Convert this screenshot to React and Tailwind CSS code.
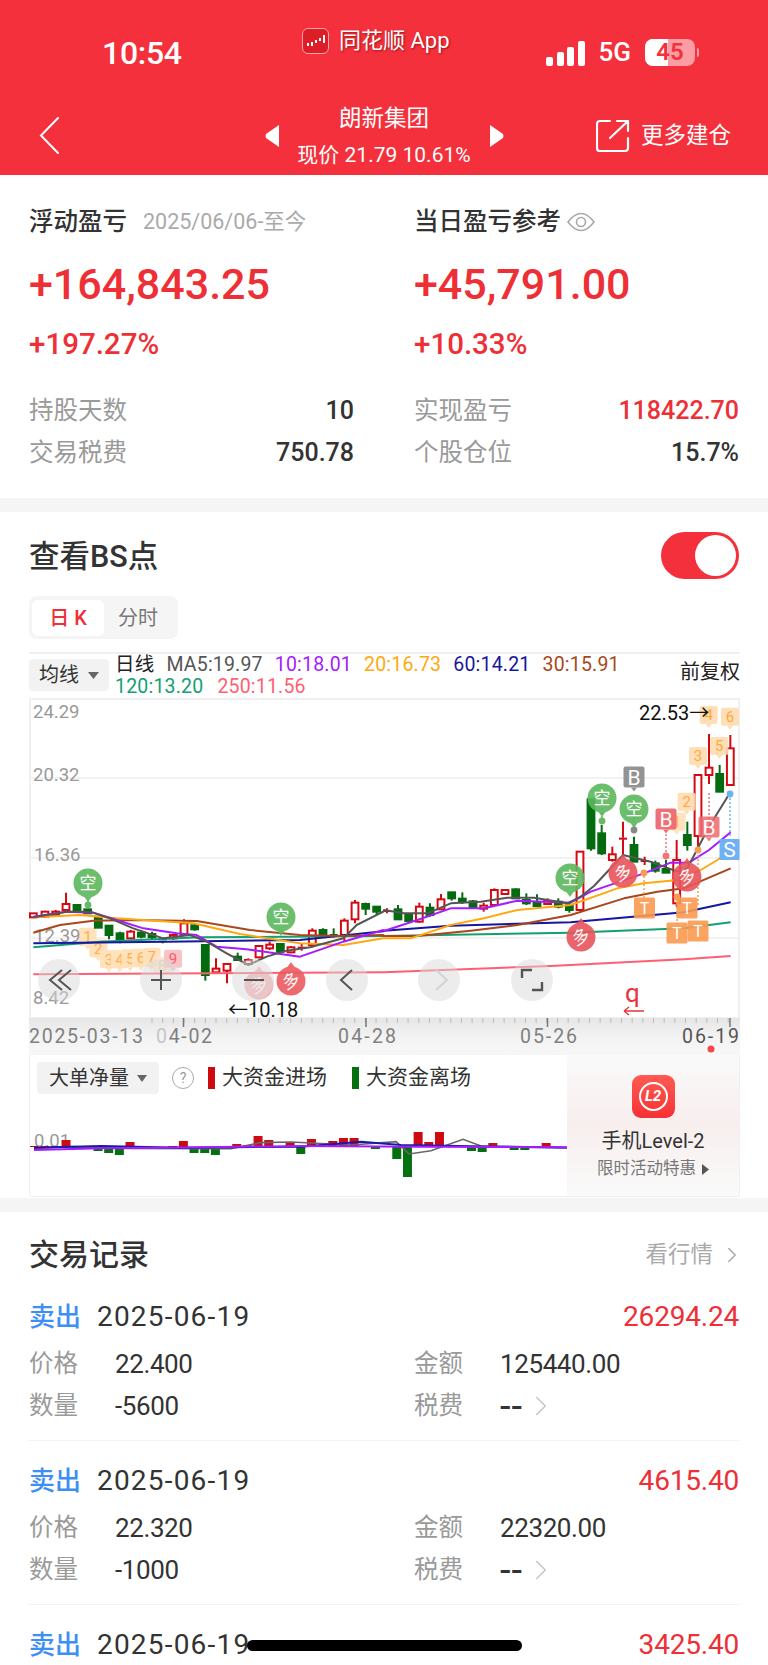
import { ChevronRight } from 'lucide-react';

const FONT = { fontFamily: 'Roboto, "Noto Sans CJK SC", sans-serif' };

// chart traces are noted in three local grids, these put them in page pixels
const a = (x, y) => [x / 3, 860 + y / 3];
const b = (x, y) => [384 + x / 3, 860 + y / 3];
const c = (x, y) => [384 + x / 3, 640 + y / 3];

// x, body top, body bottom, wick top, wick bottom, up
const candles = [
  [a, 100, 160, 172, 160, 172, 1], [a, 135, 155, 170, 152, 172, 1], [a, 167, 155, 165, 150, 170, 1],
  [a, 198, 132, 150, 98, 150, 1], [a, 231, 135, 150, 135, 150, 0], [a, 263, 148, 160, 148, 160, 0],
  [a, 295, 170, 203, 170, 203, 0], [a, 327, 197, 225, 197, 238, 0], [a, 360, 220, 238, 215, 250, 0],
  [a, 392, 215, 235, 210, 238, 1], [a, 424, 218, 230, 210, 235, 0], [a, 456, 222, 232, 215, 240, 0],
  [a, 488, 235, 243, 232, 250, 0], [a, 520, 225, 235, 222, 240, 1], [a, 552, 190, 225, 178, 228, 1],
  [a, 584, 196, 208, 190, 212, 0], [a, 616, 255, 345, 255, 362, 0], [a, 648, 326, 337, 295, 340, 1],
  [a, 681, 312, 332, 312, 370, 1], [a, 713, 290, 300, 278, 300, 0], [a, 745, 300, 312, 295, 314, 1],
  [a, 777, 258, 292, 255, 295, 1], [a, 809, 254, 265, 245, 270, 1], [a, 841, 252, 275, 252, 282, 0],
  [a, 873, 262, 277, 258, 280, 1], [a, 905, 260, 264, 250, 272, 1], [a, 937, 212, 255, 205, 262, 1],
  [a, 969, 210, 228, 205, 232, 0], [a, 1001, 222, 230, 205, 232, 0], [a, 1033, 182, 225, 175, 245, 1],
  [a, 1065, 128, 178, 120, 190, 1], [a, 1097, 132, 146, 128, 165, 0], [a, 1130, 140, 155, 140, 165, 0],
  [b, 9, 150, 155, 145, 160, 1], [b, 42, 148, 178, 135, 178, 0], [b, 74, 163, 183, 163, 185, 0],
  [b, 106, 140, 185, 128, 188, 1], [b, 138, 143, 165, 130, 170, 0], [b, 171, 118, 148, 102, 150, 1],
  [b, 203, 97, 115, 97, 122, 0], [b, 235, 116, 125, 97, 132, 0], [b, 267, 124, 142, 120, 145, 0],
  [b, 299, 137, 146, 128, 155, 1], [b, 331, 90, 135, 85, 137, 1], [b, 363, 90, 102, 88, 104, 1],
  [b, 395, 88, 115, 85, 115, 0], [b, 427, 120, 130, 100, 135, 0], [b, 459, 127, 138, 103, 140, 0],
  [b, 491, 123, 132, 115, 135, 1], [b, 523, 125, 140, 115, 145, 0], [b, 556, 136, 150, 125, 158, 0],
  [c, 588, 635, 810, 635, 810, 1], [c, 621, 478, 625, 478, 632, 0], [c, 653, 580, 640, 555, 645, 0],
  [c, 685, 643, 660, 620, 665, 1], [c, 717, 593, 598, 545, 650, 1], [c, 750, 615, 665, 590, 665, 0],
  [c, 782, 660, 665, 650, 675, 1], [c, 814, 670, 692, 662, 698, 0], [c, 846, 687, 698, 660, 698, 0],
  [c, 878, 660, 790, 600, 800, 1], [c, 910, 585, 615, 545, 632, 0], [c, 942, 405, 588, 405, 620, 1],
  [c, 975, 383, 405, 282, 432, 1], [c, 1007, 402, 455, 375, 455, 0], [c, 1039, 325, 435, 285, 435, 1],
];

function a2(pts) { return pts.map(([x, y]) => a(x, y)); }
function b2(pts) { return pts.map(([x, y]) => b(x, y)); }

const maLines = [
  ['#ff5f73', [...a2([[100, 343], [1150, 337]]), ...b2([[0, 337], [500, 318], [900, 298], [1040, 288]])]],
  ['#12a071', [...a2([[100, 262], [300, 245], [600, 232], [1150, 228]]), ...b2([[0, 228], [560, 218], [900, 205], [1040, 187]])]],
  ['#1616a0', [...a2([[100, 250], [500, 245], [900, 240], [1150, 214]]), ...b2([[0, 212], [200, 197], [560, 187], [900, 157], [1040, 127]])]],
  ['#a8481a', [...a2([[100, 218], [180, 195], [280, 182], [400, 180], [590, 183], [750, 210], [900, 225], [1020, 228], [1150, 225]]), ...b2([[0, 228], [100, 228], [260, 212], [400, 195], [560, 165], [720, 115], [820, 95], [900, 85], [1040, 25]])]],
  ['#ffa811', [...a2([[100, 172], [240, 165], [350, 175], [580, 190], [720, 222], [900, 250], [1030, 255], [1150, 235]]), ...b2([[0, 235], [80, 235], [200, 195], [300, 175], [400, 150], [560, 135], [700, 85], [780, 70], [880, 60], [950, 30], [1000, 0], [1040, -28]])]],
  ['#a61bff', [...a2([[100, 170], [200, 155], [280, 158], [350, 180], [430, 205], [530, 220], [590, 225], [650, 260], [740, 268], [900, 290], [1030, 245], [1150, 210]]), ...b2([[0, 213], [100, 180], [200, 145], [300, 145], [400, 122], [560, 128], [620, 95], [780, 40], [860, 8], [915, 8], [975, -30], [1040, -83]])]],
  ['#555555', [...a2([[100, 172], [200, 155], [270, 155], [330, 175], [400, 205], [490, 235], [570, 225], [620, 245], [680, 280], [745, 315], [800, 290], [860, 272], [930, 262], [1030, 235], [1070, 195], [1150, 155]]), ...b2([[0, 150], [60, 160], [130, 160], [200, 130], [290, 125], [370, 113], [450, 113], [550, 130], [590, 110], [630, 78], [717, -15], [800, 5], [880, 35], [910, 25], [975, -100], [1040, -205]])]],
];

const Pin = ({ x, y, label, fill, up = false, opacity = 0.9 }) => (
  <g opacity={opacity}>
    <path d={up ? `M${x - 5} ${y - 12}L${x} ${y - 19}L${x + 5} ${y - 12}Z` : `M${x - 5} ${y + 12}L${x} ${y + 19}L${x + 5} ${y + 12}Z`} fill={fill} />
    <circle cx={x} cy={y} r="14.5" fill={fill} />
    <text x={x} y={y + 6} textAnchor="middle" fontSize="17" fill="#fff" transform={label === '多' ? `rotate(-25 ${x} ${y})` : undefined}>{label}</text>
  </g>
);

const Tag = ({ x, y, label, fill, color, size = 18, fontSize = 15, opacity = 1 }) => (
  <g opacity={opacity}>
    <rect x={x - size / 2} y={y - size / 2} width={size} height={size} rx="2" fill={fill} />
    <path d={`M${x - 3} ${y + size / 2}L${x} ${y + size / 2 + 4}L${x + 3} ${y + size / 2}Z`} fill={fill} />
    <text x={x} y={y + fontSize * 0.36} textAnchor="middle" fontSize={fontSize} fill={color}>{label}</text>
  </g>
);

const Stem = ({ x, y1, y2, color }) => (
  <g>
    <line x1={x} y1={y1} x2={x} y2={y2} stroke={color} strokeWidth="1.5" strokeDasharray="2 2" />
    <circle cx={x} cy={y2} r="3.4" fill={color} />
  </g>
);

const RoundBtn = ({ x, children, fade }) => (
  <g>
    <circle cx={x} cy="980" r="21" fill="#d9d9d9" opacity="0.5" />
    <g stroke={fade ? '#d3d3d3' : '#555'} strokeWidth="2" fill="none">{children}</g>
  </g>
);

const tickXs = Array.from({ length: 55 }, (_, i) => 152 + i * 10.67);

function KChart() {
  return (
    <svg width="711" height="357" viewBox="29 698 711 357" className="ml-[29px] block" style={FONT}>
      <defs>
        <linearGradient id="dateStrip" x1="0" y1="0" x2="0" y2="1">
          <stop offset="0" stopColor="#e6e6e6" />
          <stop offset="0.5" stopColor="#f3f3f3" />
          <stop offset="1" stopColor="#f7f7f7" />
        </linearGradient>
      </defs>
      <rect x="29" y="698" width="711" height="320" fill="#fff" />
      {[778, 858, 938].map((y) => <line key={y} x1="29" x2="740" y1={y} y2={y} stroke="#eeeeee" strokeWidth="1.5" />)}
      <rect x="30" y="699" width="709" height="319" fill="none" stroke="#f0f0f0" strokeWidth="2" />

      <rect x="29" y="1018" width="711" height="37" fill="url(#dateStrip)" />
      {tickXs.map((x) => <line key={x} x1={x} x2={x} y1="1018" y2="1023" stroke="#bbbbbb" />)}
      {[183.5, 366, 547.5, 730].map((x) => <line key={x} x1={x} x2={x} y1="1018" y2="1027" stroke="#777" strokeWidth="1.5" />)}
      <g fontSize="19.5" fill="#808080">
        <text x="29" y="1043" textLength="114">2025-03-13</text>
        <text x="156" y="1043" textLength="56"><tspan fill="#c6c6c6">0</tspan>4-02</text>
        <text x="338" y="1043" textLength="58">04-28</text>
        <text x="520" y="1043" textLength="57">05-26</text>
        <text x="682" y="1043" textLength="57" fill="#555">06-19</text>
      </g>
      <circle cx="711" cy="1049" r="3.5" fill="#f4484f" />

      {/* numbered signal tags sit under the candles */}
      <g opacity="0.85">
        {[[263, 230, '1'], [295, 265, '2'], [327, 298, '3'], [359, 298, '4'], [391, 295, '5'], [423, 293, '6'], [455, 291, '7']].map(([x, y, t]) => {
          const [px, py] = a(x, y);
          return <Tag key={t} x={px} y={py} label={t} fill="#ffdcb0" color="#ffa029" />;
        })}
        <Tag x={a(487, 0)[0]} y={a(0, 317)[1]} label="8" fill="#ffe3c2" color="#f0c080" opacity="0.8" />
        <Tag x={a(519, 0)[0]} y={a(0, 296)[1]} label="9" fill="#f8b9bc" color="#f0444c" />
      </g>

      <g fontSize="18.5" fill="#999">
        <text x="33" y="718">24.29</text>
        <text x="33" y="781">20.32</text>
        <text x="34" y="861">16.36</text>
        <text x="34" y="942">12.39</text>
        <text x="33" y="1004">8.42</text>
      </g>

      {candles.map(([fn, x, top, bottom, wickTop, wickBottom, up], i) => {
        const [px, y1] = fn(x, top);
        const y2 = fn(x, bottom)[1];
        const w1 = fn(x, wickTop)[1];
        const w2 = fn(x, wickBottom)[1];
        const color = up ? '#d40a12' : '#046b10';
        const thin = y2 - y1 < 3;
        return (
          <g key={i}>
            <line x1={px} x2={px} y1={w1} y2={y1} stroke={color} strokeWidth="2" />
            <line x1={px} x2={px} y1={y2} y2={w2} stroke={color} strokeWidth="2" />
            {thin
              ? <rect x={px - 4} y={y1} width="8" height="2" fill={color} />
              : <rect x={px - 3.4} y={y1} width="6.8" height={y2 - y1} fill={up ? '#fff' : color} stroke={color} strokeWidth="2" />}
          </g>
        );
      })}

      {maLines.map(([color, pts]) => (
        <polyline key={color} points={pts.map((p) => p.join(',')).join(' ')} fill="none" stroke={color} strokeWidth="2" strokeLinejoin="round" />
      ))}

      {/* orange tags on the right run */}
      <Tag x={c(878, 0)[0]} y={c(0, 545)[1]} label="1" fill="#ffdcb0" color="#ffa029" opacity="0.8" />
      <Tag x={c(908, 0)[0]} y={c(0, 485)[1]} label="2" fill="#ffdcb0" color="#ffa029" opacity="0.9" />
      <Tag x={c(942, 0)[0]} y={c(0, 348)[1]} label="3" fill="#ffdcb0" color="#ffa029" opacity="0.9" />
      <Tag x={c(974, 0)[0]} y={c(0, 225)[1]} label="4" fill="#ffdcb0" color="#ffa029" opacity="0.9" />
      <Tag x={c(1006, 0)[0]} y={c(0, 318)[1]} label="5" fill="#ffdcb0" color="#ffa029" opacity="0.9" />
      <Tag x={c(1038, 0)[0]} y={c(0, 230)[1]} label="6" fill="#ffdcb0" color="#ffa029" opacity="0.9" />

      <Stem x={634} y1={797} y2={830} color="#888" />
      <Stem x={602} y1={800} y2={821} color="#66b866" />
      <Stem x={88} y1={900} y2={905} color="#66b866" />
      <Tag x={634} y={777} label="B" fill="#8e8e8e" color="#fff" size={21} fontSize={21} opacity="0.95" />
      <Pin x={602} y={798} label="空" fill="#5cb85c" />
      <Pin x={634} y={809} label="空" fill="#5cb85c" />
      <Pin x={88} y={883} label="空" fill="#5cb85c" />
      <Pin x={281} y={917} label="空" fill="#5cb85c" />
      <Pin x={570} y={878} label="空" fill="#5cb85c" />

      <Stem x={666} y1={830} y2={856} color="#f27379" />
      <Tag x={666} y={819} label="B" fill="#ee6a70" color="#fff" size={21} fontSize={21} opacity="0.95" />
      <Stem x={709} y1={793} y2={832} color="#f27379" />
      <Tag x={709} y={827} label="B" fill="#ee6a70" color="#fff" size={21} fontSize={21} opacity="0.85" />
      <Stem x={730} y1={794} y2={794} color="#6fb1f5" />
      <line x1={730} x2={730} y1={794} y2={838} stroke="#6fb1f5" strokeWidth="1.5" strokeDasharray="2 2" />
      <rect x={719.5} y={839} width="20" height="21" rx="1" fill="#6fb1f5" />
      <text x={729.5} y={857} textAnchor="middle" fontSize="21" fill="#fff">S</text>

      <Stem x={644} y1={898} y2={873} color="#fb9b52" />
      <Stem x={677} y1={925} y2={897} color="#fb9b52" />
      <Stem x={698} y1={905} y2={850} color="#fb9b52" />
      {[[644.5, 908], [687, 908], [677, 933], [698, 931]].map(([x, y]) => (
        <g key={`${x}-${y}`} opacity="0.9">
          <rect x={x - 10.5} y={y - 10.5} width="21" height="21" rx="1.5" fill="#fb9b52" />
          <text x={x} y={y + 6} textAnchor="middle" fontSize="16" fill="#fff">T</text>
        </g>
      ))}

      <Pin x={259} y={985} label="多" fill="#f27379" up opacity="0.55" />
      <Pin x={291} y={981} label="多" fill="#ec5a60" up />
      <Pin x={581} y={937} label="多" fill="#e8555b" up />
      <Pin x={623} y={873} label="多" fill="#e8555b" up />
      <Pin x={687} y={877} label="多" fill="#e8555b" up />

      <text x="228" y="1017" fontSize="20" fill="#111">←10.18</text>
      <text x="639" y="720" fontSize="20" fill="#111">22.53→</text>
      <text x="625" y="1002" fontSize="26" fill="#e9343d">q</text>
      <path d="M624 1011H644M624 1011L629 1007M624 1011L629 1015" stroke="#e9343d" strokeWidth="1.4" fill="none" />

      <RoundBtn x={59}><path d="M62 970L50 980L62 990M71 970L59 980L71 990" /></RoundBtn>
      <RoundBtn x={161}><path d="M161 970V990M151 980H171" /></RoundBtn>
      <RoundBtn x={253}><path d="M244 980H264" /></RoundBtn>
      <RoundBtn x={347}><path d="M352 970L341 980L352 990" /></RoundBtn>
      <RoundBtn x={439} fade><path d="M436 970L447 980L436 990" /></RoundBtn>
      <RoundBtn x={532}><path d="M522 978V970H532M542 982V990H532" strokeWidth="2.4" /></RoundBtn>
    </svg>
  );
}

// net volume, index from the left edge, signed height in pixels
const flow = [[0, 1], [1, 1], [2, 1], [3, 7], [4, -2], [5, -1], [6, -4], [7, -6], [8, -8], [9, 5], [10, -1], [11, -1], [12, -1], [13, 1], [14, 6], [15, -6], [16, -6], [17, -8], [18, -1], [19, 3], [20, 2], [21, 11], [22, 7], [24, 4], [25, -7], [26, 8], [28, 6], [29, 9], [30, 9], [31, 1], [32, -2], [33, 1], [34, -12], [35, -30], [36, 15], [37, 5], [38, 15], [41, -4], [42, -5], [43, 4], [45, -3], [46, -3], [48, 4]];

function FlowChart() {
  const yAt = (Y) => Y / 3 - 5;
  return (
    <svg width="539" height="142" viewBox="29 0 539 142" className="absolute left-0 top-0" style={FONT}>
      <text x="33" y="92" fontSize="18.5" fill="#999">0.01</text>
      {flow.map(([i, v]) => {
        const x = 33 + i * 10.67;
        return <rect key={i} x={x - 4.5} y={v > 0 ? 92 - v : 92} width="9" height={Math.abs(v)} fill={v > 0 ? '#cc0a10' : '#047010'} />;
      })}
      <polyline fill="none" stroke="#666" strokeWidth="1.6" points={`33,${yAt(295)} 70,${yAt(290)} 120,${yAt(295)} 230,${yAt(296)} 260,${yAt(278)} 290,${yAt(276)} 350,${yAt(285)} 395,${yAt(275)} 408,${yAt(312)} 430,${yAt(302)} 462,${yAt(268)} 480,${yAt(288)} 560,${yAt(292)}`} />
      <polyline fill="none" stroke="#1a1aa8" strokeWidth="2" points={`33,${yAt(293)} 100,${yAt(288)} 180,${yAt(293)} 300,${yAt(290)} 360,${yAt(275)} 400,${yAt(285)} 500,${yAt(290)} 568,${yAt(293)}`} />
      <polyline fill="none" stroke="#a61bff" strokeWidth="2" points={`33,${yAt(300)} 100,${yAt(295)} 200,${yAt(292)} 300,${yAt(288)} 420,${yAt(290)} 568,${yAt(292)}`} />
    </svg>
  );
}

const Stat = ({ label, value, red }) => (
  <div className="flex items-center justify-between h-[42px]">
    <span className="text-[24.5px] text-[#9a9a9a]">{label}</span>
    <span className={`text-[25px] font-medium ${red ? 'text-[#ee2f36]' : 'text-[#333]'}`}>{value}</span>
  </div>
);

const Field = ({ label, children }) => (
  <div className="flex items-center h-[42px]">
    <span className="w-[86px] text-[24.5px] text-[#9a9a9a]">{label}</span>
    <span className="flex items-center text-[26px] text-[#333] tracking-[-0.4px]">{children}</span>
  </div>
);

function Trade({ pnl, price, amount, qty, last }) {
  return (
    <div className={last ? '' : 'h-[147px] mb-[17px] border-b border-[#f2f2f2]'}>
      <div className="flex items-center justify-between h-[46px] mb-[3px]">
        <div className="flex items-center">
          <span className="w-[68px] text-[26px] text-[#3d8ef5] font-medium">卖出</span>
          <span className="text-[28px] text-[#333] tracking-[1.2px]">2025-06-19</span>
        </div>
        <span className="text-[28px] text-[#ee2f36] tracking-[-0.2px]">{pnl}</span>
      </div>
      {!last && (
        <div className="grid grid-cols-[385px_1fr]">
          <Field label="价格">{price}</Field>
          <Field label="金额">{amount}</Field>
          <Field label="数量">{qty}</Field>
          <Field label="税费">
            <span className="text-[38px] leading-[30px] tracking-[1px]">--</span>
            <ChevronRight className="ml-[1px] text-[#c4c4c4]" size={34} strokeWidth={1} />
          </Field>
        </div>
      )}
    </div>
  );
}

export default function App() {
  return (
    <div className="relative w-[768px] h-[1665px] overflow-hidden bg-[#f5f5f5]" style={FONT}>
      <header className="h-[175px] bg-[#f3303b] text-white">
        <div className="flex items-start h-[96px]">
          <span className="ml-[102px] mt-[33px] w-[200px] text-[32px] font-medium leading-[40px] tracking-[-0.3px]">10:54</span>
          <div className="mt-[27px] flex items-center [text-shadow:1px_1px_2px_rgba(90,0,0,0.55)]">
            <span className="flex items-center justify-center w-[27px] h-[26px] rounded-[6px] bg-[#dd1d27] border border-[#f7a3a7]">
              <svg width="20" height="14" viewBox="0 0 20 14">
                <g fill="#fff"><rect x="1" y="9" width="2" height="3" /><rect x="5" y="8" width="2" height="4" /><rect x="9" y="6" width="2" height="3" /><rect x="13" y="4" width="2" height="3" /><rect x="17" y="1" width="2" height="8" /></g>
              </svg>
            </span>
            <span className="ml-[10px] text-[22px] leading-[28px]">同花顺 App</span>
          </div>
          <div className="ml-auto mr-[69px] mt-[38px] flex items-center">
            <svg width="39" height="25" viewBox="0 0 39 25" className="mt-[2px]">
              <g fill="#fff"><rect x="0" y="16" width="7" height="9" rx="2" /><rect x="11" y="11" width="7" height="14" rx="2" /><rect x="21" y="6" width="7" height="19" rx="2" /><rect x="32" y="0" width="7" height="25" rx="2" /></g>
            </svg>
            <span className="ml-[14px] text-[26px] font-medium leading-[28px]">5G</span>
            <span className="relative ml-[14px] w-[50px] h-[27px] rounded-[8px] bg-[#fb9da2] overflow-hidden text-center text-[24px] leading-[27px] font-semibold text-[#f3303b]">
              <span className="absolute left-0 top-0 h-full w-[23px] bg-white" />
              <span className="relative">45</span>
            </span>
            <span className="ml-[2px] w-[2px] h-[9px] rounded-r bg-[#fb9da2]" />
          </div>
        </div>
        <div className="relative flex items-center h-[79px]">
          <svg className="ml-[39px]" width="21" height="37" viewBox="0 0 21 37" fill="none" stroke="#fff" strokeWidth="2" strokeLinecap="round">
            <path d="M19 1L2 18.500L19 36" />
          </svg>
          <div className="absolute left-[265px] w-[239px] flex items-center justify-between">
            <svg width="14" height="22" viewBox="0 0 14 22"><path d="M14 0V22L1 13Q0 11 1 9Z" fill="#fff" /></svg>
            <svg width="14" height="22" viewBox="0 0 14 22"><path d="M0 0V22L13 13Q14 11 13 9Z" fill="#fff" /></svg>
          </div>
          <div className="absolute left-0 right-0 top-[7px] text-center">
            <div className="text-[22.5px] leading-[30px] text-center">朗新集团</div>
            <div className="text-[21px] leading-[26px] mt-[9px]">现价 21.79 10.61%</div>
          </div>
          <div className="ml-auto mr-[37px] flex items-center">
            <svg width="34" height="34" viewBox="0 0 34 34" fill="none" stroke="#fff" strokeWidth="2.2" strokeLinecap="round" strokeLinejoin="round">
              <path d="M14 2H4Q1 2 1 5V29Q1 32 4 32H29Q32 32 32 29V19" />
              <path d="M14 19L32 2M21 2H32V12" />
            </svg>
            <span className="ml-[11px] text-[22.5px]">更多建仓</span>
          </div>
        </div>
      </header>

      <section className="h-[323px] bg-white px-[29px] pt-[30px]">
        <div className="grid grid-cols-[385px_1fr]">
          <div className="flex items-center h-[34px]">
            <span className="text-[24.5px] text-[#333] font-medium">浮动盈亏</span>
            <span className="ml-[16px] text-[21.5px] text-[#aaaaaa]">2025/06/06-至今</span>
          </div>
          <div className="flex items-center h-[34px]">
            <span className="text-[24.5px] text-[#333] font-medium">当日盈亏参考</span>
            <svg className="ml-[6px]" width="28" height="22" viewBox="0 0 28 22" fill="none" stroke="#a8a8a8" strokeWidth="1.6">
              <path d="M1 11Q14 -6 27 11Q14 28 1 11Z" /><circle cx="14" cy="11" r="4.5" />
            </svg>
          </div>
          <div className="mt-[20px] text-[43px] font-medium leading-[50px] text-[#ee2f36]">+164,843.25</div>
          <div className="mt-[20px] text-[43px] font-medium leading-[50px] text-[#ee2f36]">+45,791.00</div>
          <div className="mt-[17px] text-[29.5px] font-medium leading-[36px] text-[#ee2f36]">+197.27%</div>
          <div className="mt-[17px] text-[29.5px] font-medium leading-[36px] text-[#ee2f36]">+10.33%</div>
        </div>
        <div className="mt-[28px] grid grid-cols-[325px_325px] gap-x-[60px]">
          <Stat label="持股天数" value="10" />
          <Stat label="实现盈亏" value="118422.70" red />
          <Stat label="交易税费" value="750.78" />
          <Stat label="个股仓位" value="15.7%" />
        </div>
      </section>

      <section className="mt-[14px] h-[686px] bg-white">
        <div className="flex items-center justify-between h-[84px] px-[29px] pt-[3px]">
          <span className="mt-[2px] text-[30.5px] text-[#333] font-medium">查看BS点</span>
          <span className="flex items-center justify-end w-[78px] h-[47px] rounded-full bg-[#f3303b] pr-[3px]">
            <span className="w-[41px] h-[41px] rounded-full bg-white" />
          </span>
        </div>
        <div className="ml-[29px] w-[149px] h-[43px] rounded-[8px] bg-[#f5f5f5] flex items-center pl-[3px]">
          <span className="flex items-center justify-center w-[72px] h-[36px] rounded-[6px] bg-white text-[20px] text-[#ee2f36] font-medium">日 K</span>
          <span className="ml-[14px] text-[20px] text-[#777]">分时</span>
        </div>

        <div className="relative ml-[29px] mt-[13px] w-[711px] h-[46px] border-t-2 border-[#f0f0f0]">
          <span className="absolute left-0 top-[5px] flex items-center justify-center gap-[9px] w-[80px] h-[32px] rounded-[4px] bg-[#f2f2f2] text-[20px] text-[#333]">
            均线
            <svg width="11" height="7" viewBox="0 0 11 7"><path d="M0 0H11L5.500 7Z" fill="#666" /></svg>
          </span>
          <div className="absolute left-[86px] top-0 w-[540px] text-[19.5px] leading-[22px] whitespace-nowrap tracking-[0.2px]">
            <div className="flex gap-[12px]">
              <span className="text-[#222]">日线</span>
              <span className="text-[#555]">MA5:19.97</span>
              <span className="text-[#a61bff]">10:18.01</span>
              <span className="text-[#ffa811]">20:16.73</span>
              <span className="text-[#1616a0]">60:14.21</span>
              <span className="text-[#a8481a]">30:15.91</span>
            </div>
            <div className="flex gap-[14px]">
              <span className="text-[#12a071]">120:13.20</span>
              <span className="text-[#ff5f73]">250:11.56</span>
            </div>
          </div>
          <span className="absolute right-0 top-[3px] text-[20px] text-[#222]">前复权</span>
        </div>

        <KChart />

        <div className="relative ml-[29px] w-[711px] h-[142px] border-x border-b border-[#f0f0f0] overflow-hidden">
          <FlowChart />
          <div className="absolute left-[7px] top-[7px] flex items-center">
            <span className="flex items-center justify-center gap-[8px] w-[122px] h-[32px] rounded-[4px] bg-[#f2f2f2] text-[20px] text-[#333]">
              大单净量
              <svg width="10" height="7" viewBox="0 0 10 7"><path d="M0 0H10L5 7Z" fill="#666" /></svg>
            </span>
            <span className="ml-[13px] flex items-center justify-center w-[22px] h-[22px] rounded-full border border-[#aaa] text-[14px] text-[#999]">?</span>
            <span className="ml-[14px] w-[7px] h-[22px] bg-[#cc0a10]" />
            <span className="ml-[7px] text-[21px] text-[#333]">大资金进场</span>
            <span className="ml-[25px] w-[7px] h-[22px] bg-[#047010]" />
            <span className="ml-[7px] text-[21px] text-[#333]">大资金离场</span>
          </div>
          <div className="absolute right-0 top-0 flex h-full w-[172px] flex-col items-center bg-gradient-to-b from-[#fafafa] via-[#f8eeee] to-[#fafafa]">
            <div className="mt-[20px] flex h-[43px] w-[43px] items-center justify-center rounded-[9px] bg-gradient-to-b from-[#ff5a52] to-[#f62f35]">
              <span className="flex h-[29px] w-[29px] items-center justify-center rounded-full border-2 border-white text-[15px] font-bold italic text-white">L2</span>
            </div>
            <span className="mt-[10px] text-[20px] leading-[26px] text-[#333]">手机Level-2</span>
            <span className="mt-[4px] flex items-center text-[16.500px] leading-[22px] text-[#777]">
              限时活动特惠
              <svg className="ml-[6px]" width="7" height="11" viewBox="0 0 7 11"><path d="M0 0L7 5.500L0 11Z" fill="#555" /></svg>
            </span>
          </div>
        </div>
      </section>

      <section className="mt-[14px] bg-white px-[29px] h-[460px]">
        <div className="flex items-center justify-between h-[84px] pt-[1px]">
          <span className="text-[30px] text-[#333] font-medium">交易记录</span>
          <span className="flex items-center text-[22.500px] text-[#aaaaaa]">
            看行情
            <ChevronRight className="ml-[6px] -mr-[6px]" size={26} strokeWidth={1.4} />
          </span>
        </div>
        <div className="-mt-[2px]">
          <Trade pnl="26294.24" price="22.400" amount="125440.00" qty="-5600" />
          <Trade pnl="4615.40" price="22.320" amount="22320.00" qty="-1000" />
          <Trade pnl="3425.40" last />
        </div>
      </section>

      <div className="absolute left-[247px] top-[1640px] w-[275px] h-[11px] rounded-full bg-black" />
    </div>
  );
}
